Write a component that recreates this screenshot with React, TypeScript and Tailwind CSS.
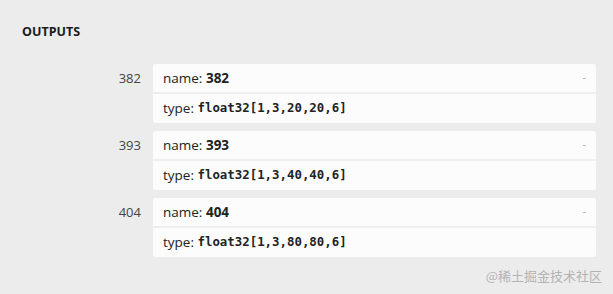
import React from 'react';

const outputs = [
  { id: '382', type: 'float32[1,3,20,20,6]' },
  { id: '393', type: 'float32[1,3,40,40,6]' },
  { id: '404', type: 'float32[1,3,80,80,6]' },
];

const OutputCard: React.FC<{ id: string; type: string }> = ({ id, type }) => (
  <div className="flex items-start">
    <div className="w-[141px] pt-[5px] text-right text-[13px] text-[#444]">{id}</div>
    <div className="ml-[12px] w-[443px] rounded-[2px] bg-[#fcfcfc]">
      <div className="flex h-[30px] items-center justify-between border-b-2 border-[#eeeeee] pl-[10px] pr-[10px] text-[13.5px] text-[#222]">
        <span>
          name: <b className="font-bold">{id}</b>
        </span>
        <span className="mb-[2px] text-[11px] text-[#aaa]">-</span>
      </div>
      <div className="flex h-[29px] items-center pl-[10px] text-[13.5px] text-[#222]">
        <span>type:&nbsp;</span>
        <span className="font-['DejaVu_Sans_Mono',monospace] text-[12.4px] font-bold">{type}</span>
      </div>
    </div>
  </div>
);

export default function App() {
  return (
    <div className="relative flex h-[294px] w-[613px] flex-col bg-[#ececec] font-['Open_Sans',sans-serif]">
      <div className="pl-[22px] pt-[23px] text-[12.5px] font-bold text-[#1a1a1a]">OUTPUTS</div>
      <div className="mt-[22px] flex flex-col gap-[8px]">
        {outputs.map(o => (
          <OutputCard key={o.id} id={o.id} type={o.type} />
        ))}
      </div>
      <div className="absolute bottom-[9px] right-[11px] font-['Noto_Sans_CJK_SC',sans-serif] text-[13px] text-[#b3b3b3]">
        @稀土掘金技术社区
      </div>
    </div>
  );
}
